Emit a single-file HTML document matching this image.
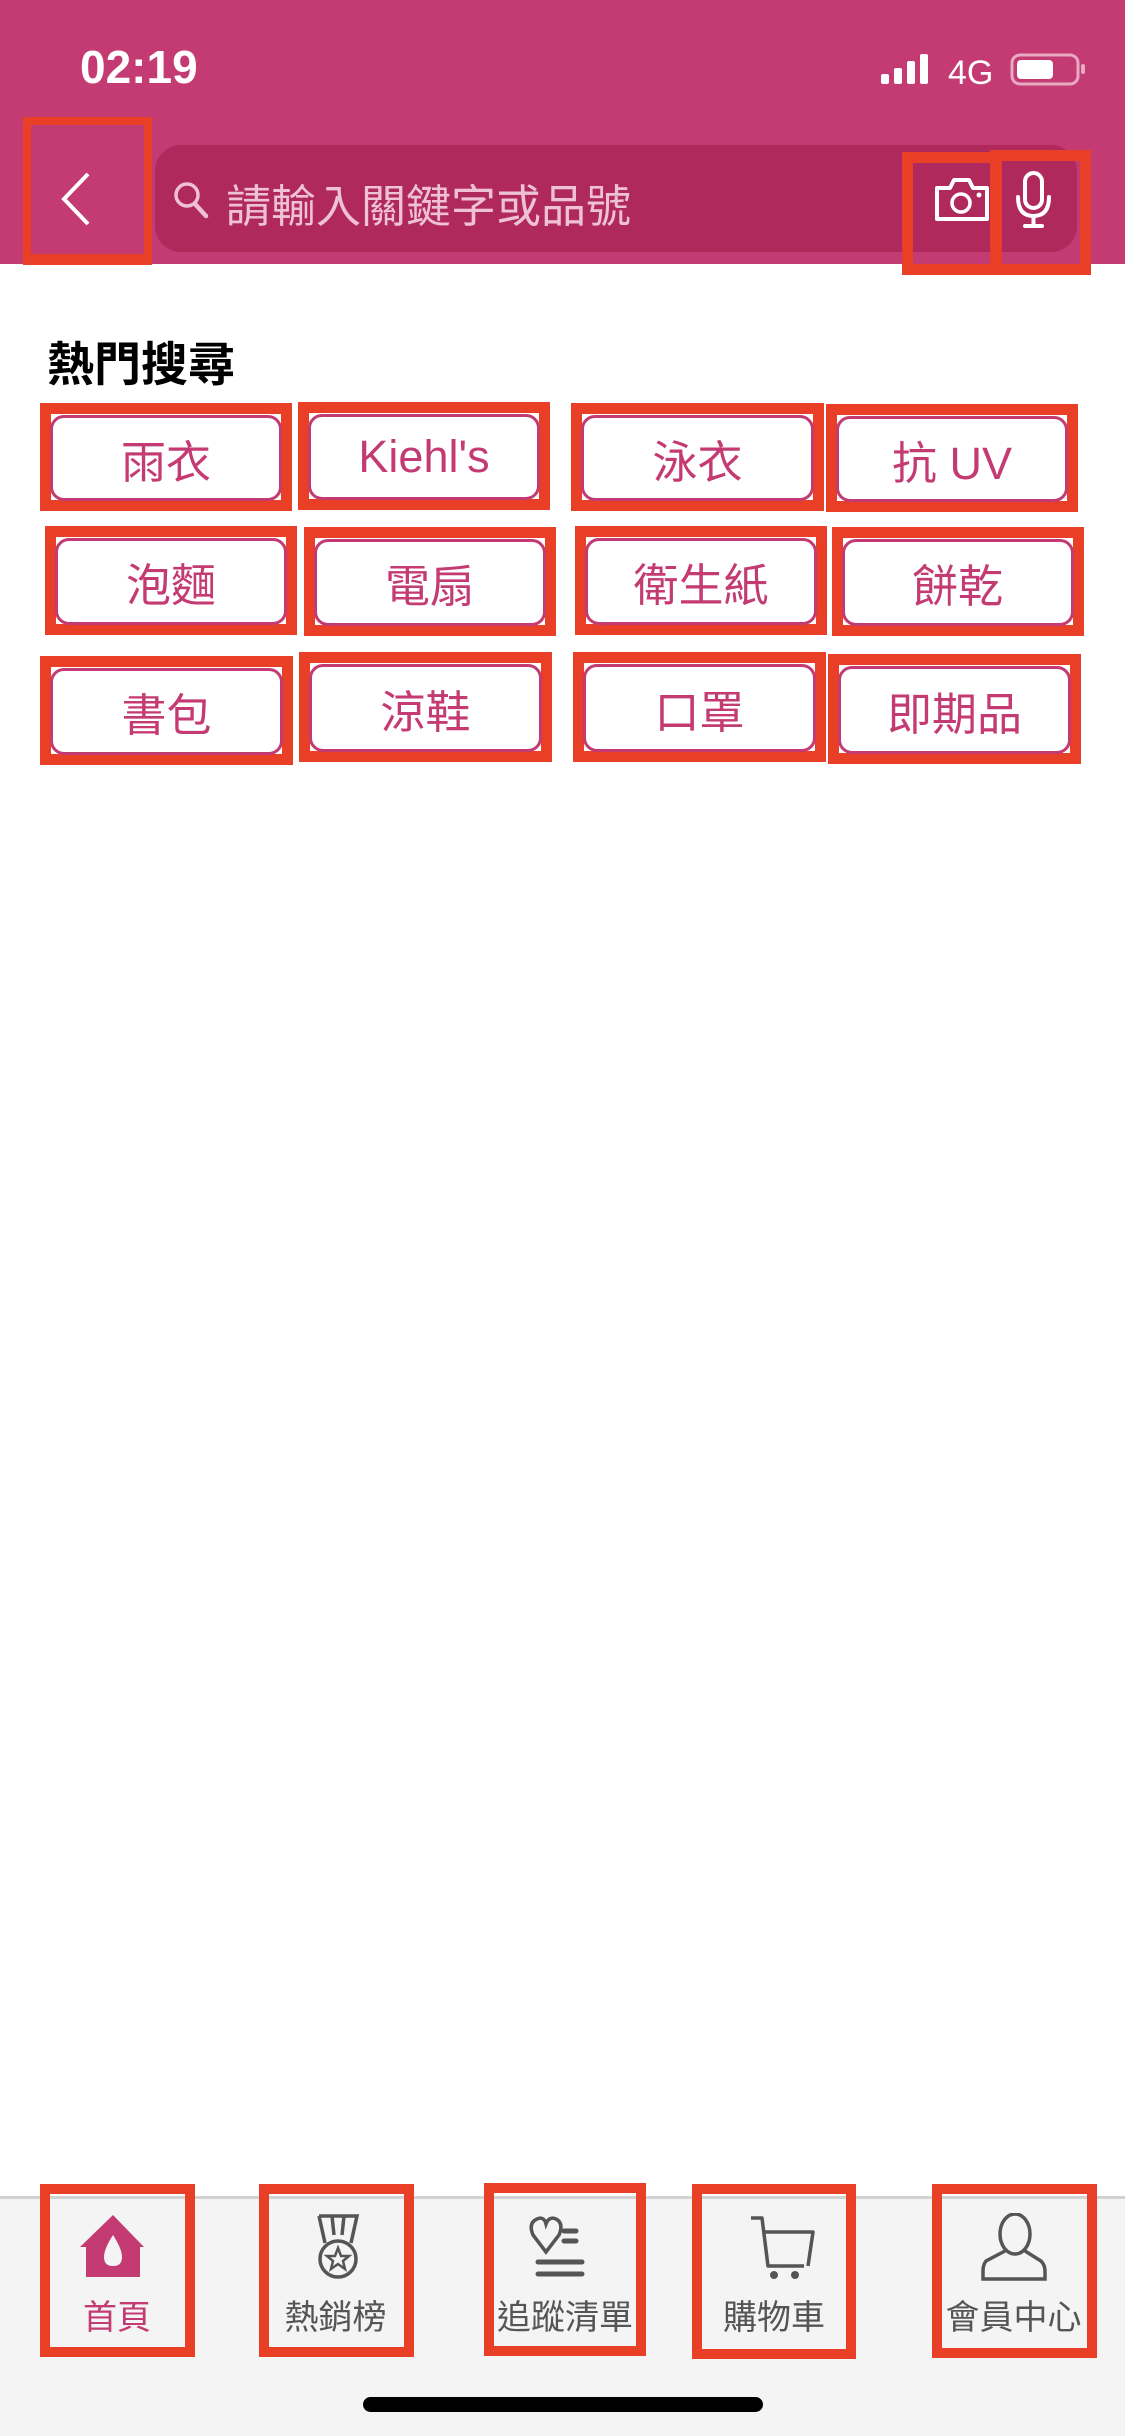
<!DOCTYPE html>
<html><head><meta charset="utf-8"><style>
*{margin:0;padding:0;box-sizing:border-box}
body{width:1125px;height:2436px;position:relative;background:#fff;font-family:"Liberation Sans","Noto Sans CJK TC",sans-serif;overflow:hidden}
.a{position:absolute}
.red{position:absolute;border:11px solid #EA3F27}
.tag{position:absolute;border:3px solid #C43A72;border-radius:14px;background:#fff;color:#C43A72;font-size:45px;display:flex;align-items:center;justify-content:center}
.nav{position:absolute;text-align:center;color:#555;font-size:34px}
</style></head><body>
<div class="a" style="left:0;top:0;width:1125px;height:264px;background:#C43A72"></div>
<div class="a" style="left:80px;top:40px;color:#fff;font-size:46px;font-weight:bold">02:19</div>
<svg class="a" style="left:880px;top:52px" width="210" height="34" viewBox="0 0 210 34">
<rect x="1" y="22" width="8" height="10" rx="2" fill="#fff"/><rect x="14" y="16" width="8" height="16" rx="2" fill="#fff"/><rect x="27" y="9" width="8" height="23" rx="2" fill="#fff"/><rect x="40" y="2" width="8" height="30" rx="2" fill="#fff"/>
<text x="68" y="32" fill="#fff" font-size="34" font-family="Liberation Sans">4G</text>
<rect x="132" y="3" width="66" height="29" rx="8" fill="none" stroke="#e8a9c2" stroke-width="3"/><rect x="137" y="8" width="36" height="19" rx="4" fill="#fff"/><rect x="201" y="12" width="4" height="10" rx="2" fill="#e8a9c2"/>
</svg>
<div class="a" style="left:155px;top:145px;width:922px;height:107px;background:#B0295C;border-radius:26px"></div>
<svg class="a" style="left:58px;top:170px" width="36" height="58" viewBox="0 0 36 58"><path d="M30 4 L6 29 L30 54" fill="none" stroke="#fff" stroke-width="4"/></svg>
<svg class="a" style="left:172px;top:180px" width="38" height="40" viewBox="0 0 38 40"><circle cx="15" cy="15" r="11" fill="none" stroke="#EFC1D4" stroke-width="3.5"/><path d="M23 24 L34 36" stroke="#EFC1D4" stroke-width="4.5" stroke-linecap="round"/></svg>
<div class="a" style="left:226px;top:170px;color:#EFC1D4;font-size:45px">請輸入關鍵字或品號</div>
<svg class="a" style="left:934px;top:176px" width="56" height="46" viewBox="0 0 56 46"><path d="M3 12 H16 L20 4 H35 L39 12 H53 V43 H3 Z" fill="none" stroke="#fff" stroke-width="4" stroke-linejoin="round"/><circle cx="27" cy="27" r="9" fill="none" stroke="#fff" stroke-width="3.5"/><circle cx="45" cy="19" r="2.5" fill="#fff"/></svg>
<svg class="a" style="left:1014px;top:170px" width="40" height="60" viewBox="0 0 40 60"><rect x="11" y="3" width="17" height="35" rx="8.5" fill="none" stroke="#fff" stroke-width="4"/><path d="M4 27 Q4 46 19.5 46 Q35 46 35 27 M19.5 46 V56 M11 56 H28" fill="none" stroke="#fff" stroke-width="4" stroke-linecap="round"/></svg>
<div class="red" style="left:23px;top:117px;width:129px;height:148px;border-width:8px 8px 11px 8px"></div>
<div class="red" style="left:902px;top:152px;width:100px;height:123px"></div>
<div class="red" style="left:990px;top:150px;width:101px;height:125px"></div>

<div class="a" style="left:47px;top:326px;font-size:47px;font-weight:bold;color:#000">熱門搜尋</div>

<div class="red" style="left:40px;top:403px;width:252px;height:108px"></div><div class="tag" style="left:50px;top:415px;width:232px;height:86px">雨衣</div>
<div class="red" style="left:298px;top:402px;width:252px;height:108px"></div><div class="tag" style="left:308px;top:414px;width:232px;height:86px">Kiehl's</div>
<div class="red" style="left:571px;top:403px;width:253px;height:108px"></div><div class="tag" style="left:581px;top:415px;width:233px;height:86px">泳衣</div>
<div class="red" style="left:826px;top:404px;width:252px;height:108px"></div><div class="tag" style="left:836px;top:416px;width:232px;height:86px">抗 UV</div>

<div class="red" style="left:45px;top:526px;width:252px;height:109px"></div><div class="tag" style="left:55px;top:538px;width:232px;height:87px">泡麵</div>
<div class="red" style="left:304px;top:527px;width:252px;height:109px"></div><div class="tag" style="left:314px;top:539px;width:232px;height:87px">電扇</div>
<div class="red" style="left:575px;top:526px;width:252px;height:109px"></div><div class="tag" style="left:585px;top:538px;width:232px;height:87px">衛生紙</div>
<div class="red" style="left:832px;top:527px;width:252px;height:109px"></div><div class="tag" style="left:842px;top:539px;width:232px;height:87px">餅乾</div>

<div class="red" style="left:40px;top:656px;width:253px;height:109px"></div><div class="tag" style="left:50px;top:668px;width:233px;height:87px">書包</div>
<div class="red" style="left:299px;top:652px;width:253px;height:110px"></div><div class="tag" style="left:309px;top:664px;width:233px;height:88px">涼鞋</div>
<div class="red" style="left:573px;top:652px;width:253px;height:110px"></div><div class="tag" style="left:583px;top:664px;width:233px;height:88px">口罩</div>
<div class="red" style="left:828px;top:654px;width:253px;height:110px"></div><div class="tag" style="left:838px;top:666px;width:233px;height:88px">即期品</div>

<div class="a" style="left:0;top:2196px;width:1125px;height:240px;background:#F4F4F4;border-top:3px solid #d2d2d2"></div>
<svg class="a" style="left:78px;top:2213px" width="70" height="66" viewBox="0 0 70 66"><path d="M35 2 L66 34 L62 34 L62 64 L8 64 L8 34 L2 34 Z" fill="#C43A72"/><path d="M35 22 Q44 36 44 44 Q44 53 35 53 Q26 53 26 44 Q26 36 35 22Z" fill="#F4F4F4"/></svg>
<div class="nav" style="left:40px;top:2290px;width:154px;color:#C43A72">首頁</div>
<svg class="a" style="left:313px;top:2213px" width="50" height="68" viewBox="0 0 50 68"><path d="M6 3 H44 L38 30 M6 3 L12 30 M19 3 L21 22 M31 3 L29 22" fill="none" stroke="#555" stroke-width="3.5"/><circle cx="25" cy="46" r="18" fill="none" stroke="#555" stroke-width="3.5"/><path d="M25 35 L28 43 L36 43 L30 48 L32 56 L25 51 L18 56 L20 48 L14 43 L22 43 Z" fill="none" stroke="#555" stroke-width="2.5"/></svg>
<div class="nav" style="left:258px;top:2290px;width:155px">熱銷榜</div>
<svg class="a" style="left:528px;top:2215px" width="70" height="64" viewBox="0 0 70 64"><path d="M18 37 L5 20 Q0 8 9 4 Q16 1 18 9 Q21 1 28 4 Q36 8 31 20 Z" fill="none" stroke="#555" stroke-width="3.5"/><path d="M36 16 H48 M36 26 H48 M10 47 H54 M10 59 H54" stroke="#555" stroke-width="5" stroke-linecap="round"/></svg>
<div class="nav" style="left:485px;top:2290px;width:160px">追蹤清單</div>
<svg class="a" style="left:748px;top:2214px" width="72" height="66" viewBox="0 0 72 66"><path d="M3 4 H14 L20 52 H56 M17 18 H65 L60 52" fill="none" stroke="#555" stroke-width="3.5" stroke-linejoin="round"/><circle cx="26" cy="61" r="4" fill="#555"/><circle cx="47" cy="61" r="4" fill="#555"/></svg>
<div class="nav" style="left:692px;top:2290px;width:164px">購物車</div>
<svg class="a" style="left:980px;top:2213px" width="70" height="68" viewBox="0 0 70 68"><ellipse cx="35" cy="21" rx="15" ry="20" fill="none" stroke="#555" stroke-width="3.5"/><path d="M25 38 L6 48 Q3 52 3 58 V66 H65 V58 Q65 52 61 48 L45 38" fill="none" stroke="#555" stroke-width="3.5"/></svg>
<div class="nav" style="left:931px;top:2290px;width:165px">會員中心</div>
<div class="red" style="left:40px;top:2184px;width:155px;height:173px;border-width:10px"></div>
<div class="red" style="left:259px;top:2184px;width:155px;height:173px;border-width:10px"></div>
<div class="red" style="left:484px;top:2183px;width:162px;height:173px;border-width:10px"></div>
<div class="red" style="left:692px;top:2184px;width:164px;height:175px;border-width:10px"></div>
<div class="red" style="left:932px;top:2184px;width:165px;height:174px;border-width:10px"></div>
<div class="a" style="left:363px;top:2397px;width:400px;height:15px;background:#000;border-radius:8px"></div>
</body></html>
